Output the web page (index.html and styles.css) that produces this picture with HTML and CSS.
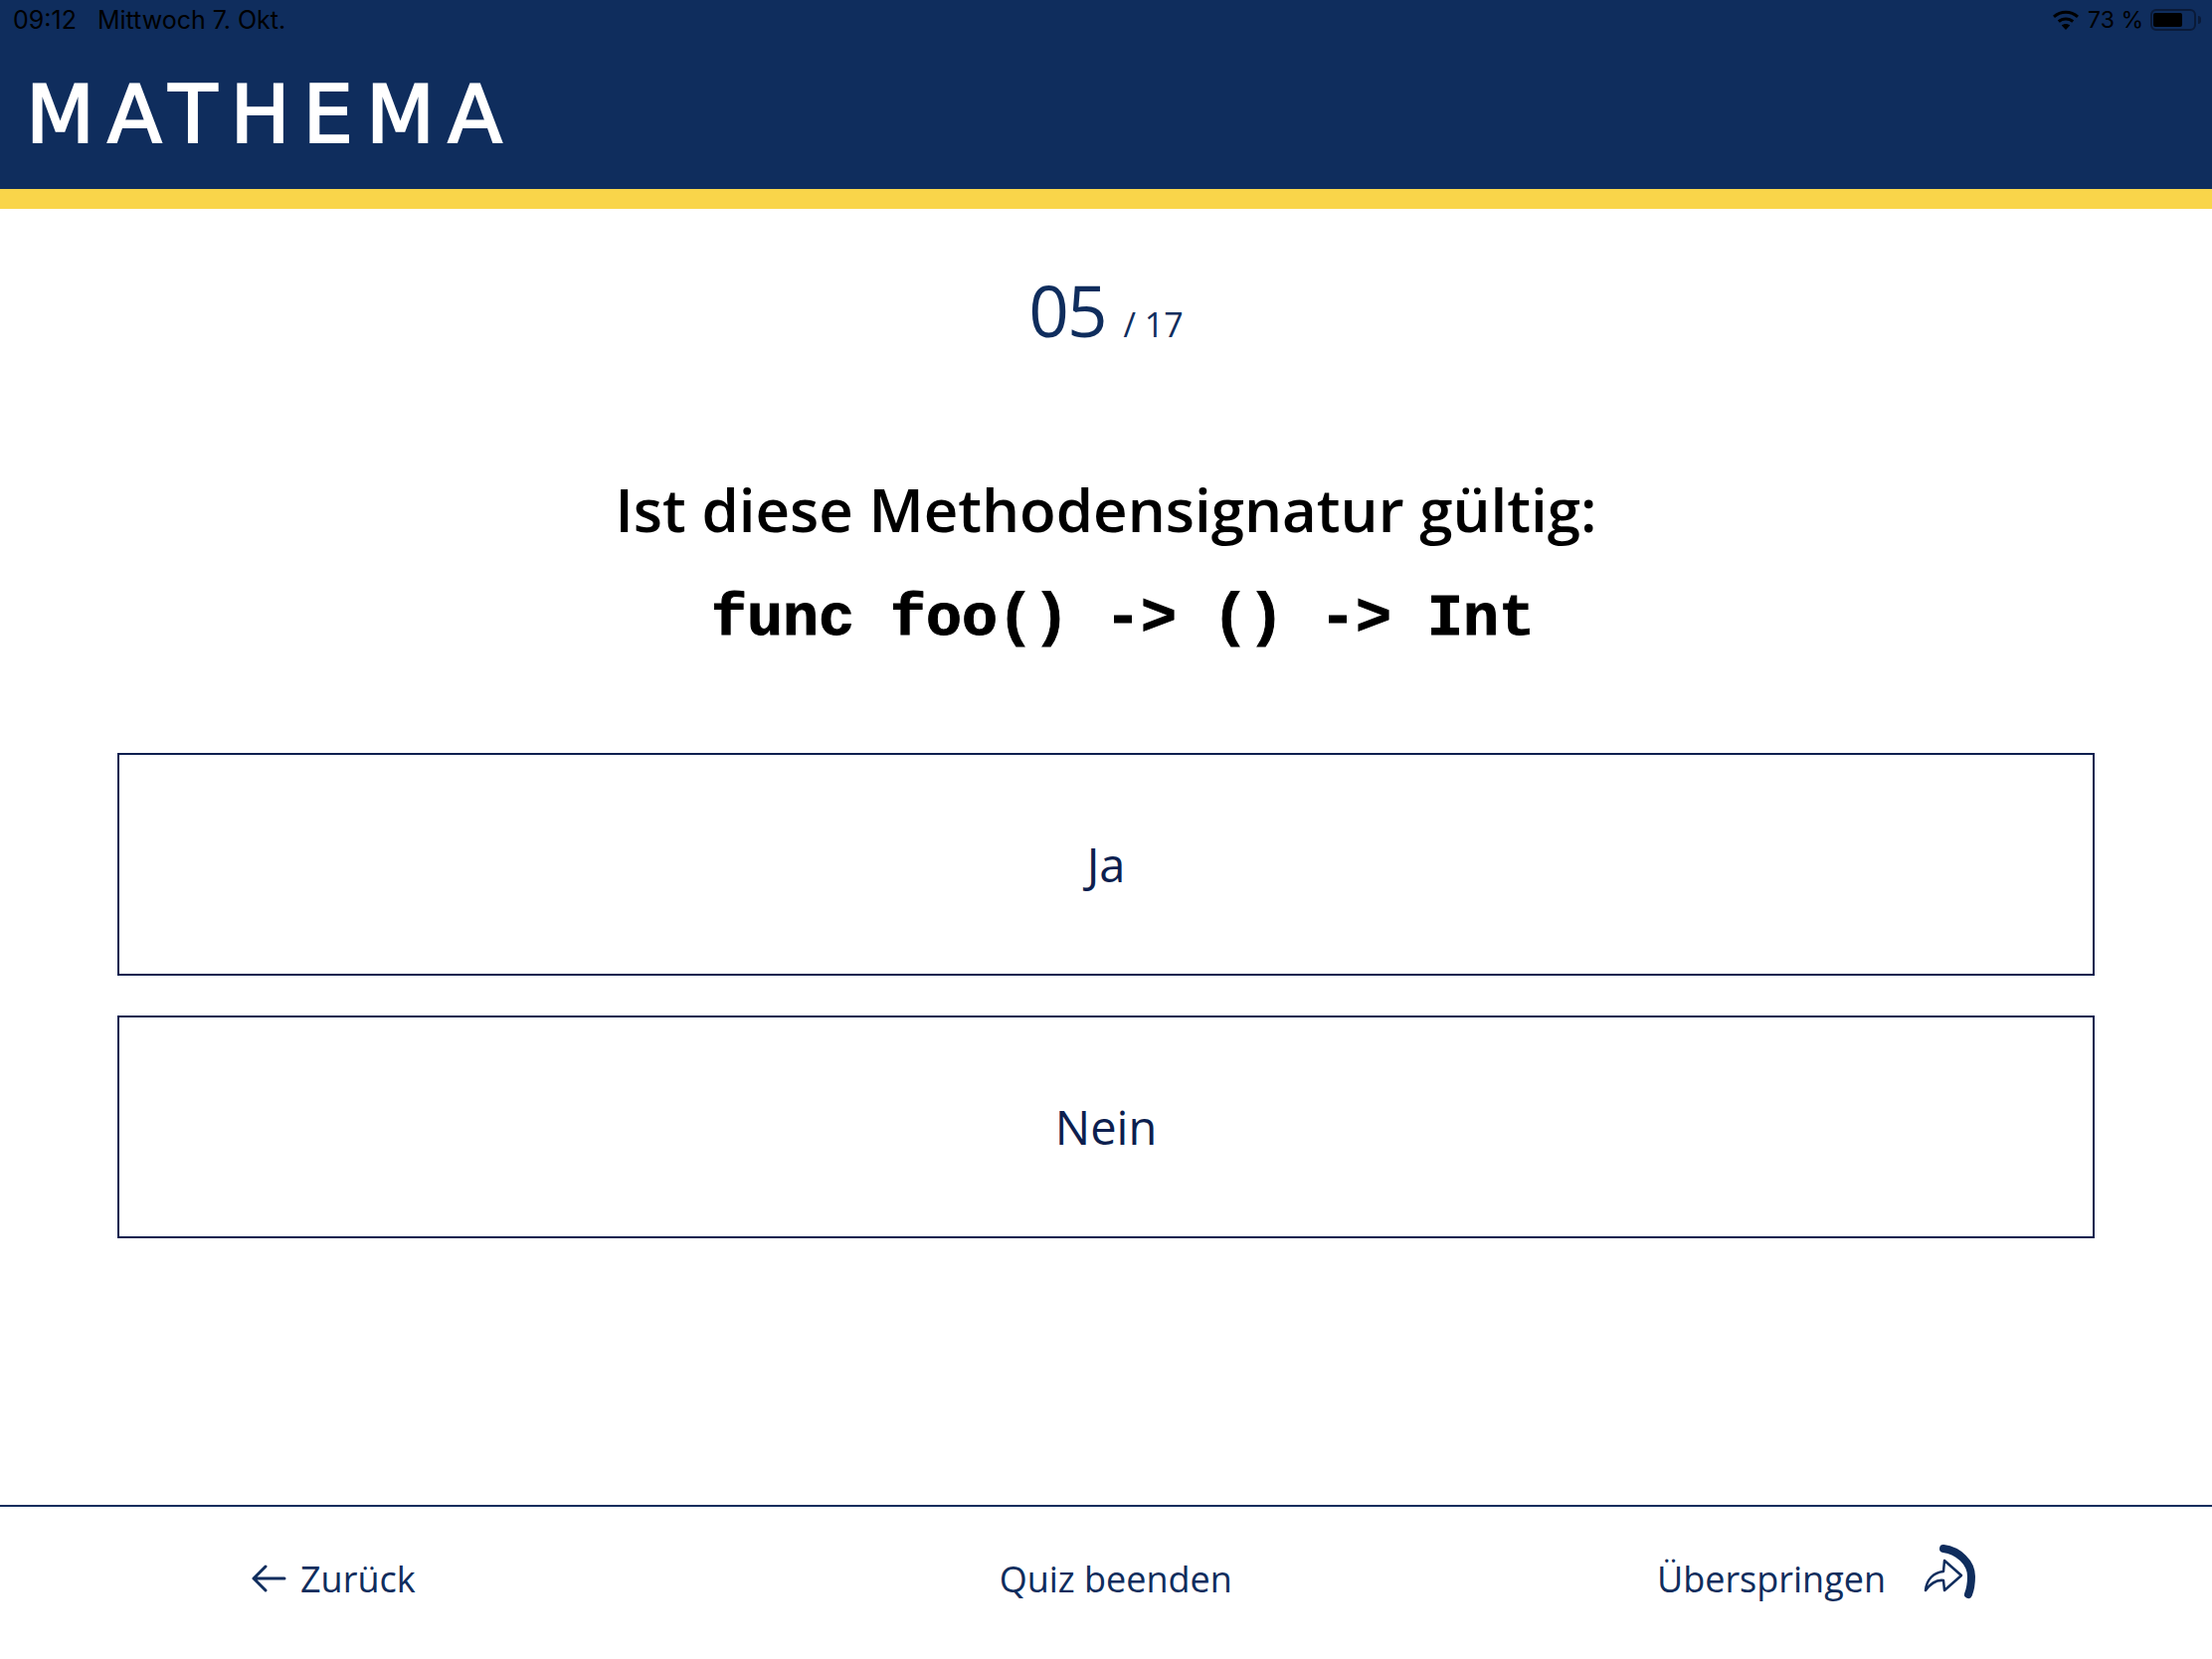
FILE: index.html
```html
<!DOCTYPE html>
<html lang="de">
<head>
    <meta charset="UTF-8">
    <meta name="viewport" content="width=device-width, initial-scale=1.0">
    <title>Mathema Quiz</title>
    <link rel="stylesheet" href="styles.css">
</head>
<body>
    <header class="header">
        <div class="status-bar">
            <div class="status-left">
                <span>09:12</span>
                <span>Mittwoch 7. Okt.</span>
            </div>
            <div class="status-right">
                <svg class="wifi" width="28" height="20" viewBox="0 0 28 20">
                    <path d="M14 20 L9.8 15.4 C12.2 13.4 15.8 13.4 18.2 15.4 Z" fill="#000"/>
                    <path d="M6.8 11.6 C10.8 8 17.2 8 21.2 11.6" fill="none" stroke="#000" stroke-width="3"/>
                    <path d="M2 6.8 C9 .6 19 .6 26 6.8" fill="none" stroke="#000" stroke-width="3"/>
                </svg>
                <span class="battery-text">73 %</span>
                <div class="battery"><div class="battery-level"></div></div>
                <div class="battery-nub"></div>
            </div>
        </div>
        <div class="logo">MATHEMA</div>
    </header>

    <main class="quiz">
        <div class="counter"><span class="counter-current">05</span><span class="counter-total">/ 17</span></div>
        <h1 class="question">Ist diese Methodensignatur gültig:</h1>
        <code class="code">func foo() -&gt; () -&gt; Int</code>
        <div class="answers">
            <div class="answer">Ja</div>
            <div class="answer">Nein</div>
        </div>
    </main>

    <footer class="footer">
        <div class="foot-item foot-back">
            <svg width="36" height="28" viewBox="0 0 36 28">
                <path d="M34 14 H3 M15 2 L3 14 L15 26" fill="none" stroke="#0f2d5d" stroke-width="3" stroke-linecap="round" stroke-linejoin="round"/>
            </svg>
            <span>Zurück</span>
        </div>
        <div class="foot-item foot-quit">Quiz beenden</div>
        <div class="foot-item foot-skip">
            <span>Überspringen</span>
            <svg class="skip-icon" width="60" height="60" viewBox="0 0 60 60">
                <path d="M22 7 C37 9 50 21 50 35 C50 42 49 48 47 53" fill="none" stroke="#0f2d5d" stroke-width="8" stroke-linecap="round"/>
                <path d="M4 49 C5 38 12 31 22 30 L23 19 L40 34 L23 49 L22 39 C14 38 9 42 4 49 Z" fill="none" stroke="#0f2d5d" stroke-width="2.5" stroke-linejoin="round"/>
            </svg>
        </div>
    </footer>
</body>
</html>
```

FILE: styles.css
```css
body {
    margin: 0;
    height: 1668px;
    display: flex;
    flex-direction: column;
    background: #fff;
    font-family: "Open Sans", sans-serif;
    color: #0f2d5d;
    overflow: hidden;
}
.header {
    height: 190px;
    background: #0f2d5d;
    border-bottom: 20px solid #f9d54a;
}
.status-bar {
    height: 40px;
    padding: 0 11px 0 13px;
    display: flex;
    justify-content: space-between;
    align-items: center;
    font-family: Inter, sans-serif;
    font-size: 25px;
    color: #000;
}
.status-left {
    display: flex;
    gap: 21px;
}
.status-right {
    display: flex;
    align-items: center;
    font-size: 23px;
}
.wifi {
    margin-right: 8px;
}
.battery {
    width: 46px;
    height: 22px;
    box-sizing: border-box;
    margin-left: 7px;
    padding: 2px 1px;
    border: 2px solid #0a1a38;
    border-radius: 6px;
}
.battery-level {
    width: 29px;
    height: 100%;
    background: #000;
    border-radius: 2px;
}
.battery-nub {
    width: 3px;
    height: 8px;
    margin-left: 2px;
    background: #0a1a38;
    border-radius: 0 3px 3px 0;
}
.logo {
    margin-top: 36px;
    padding-left: 26px;
    font-family: "DejaVu Sans", sans-serif;
    font-size: 80px;
    line-height: 80px;
    letter-spacing: 13px;
    -webkit-text-stroke: 2px #fff;
    color: #fff;
}
.quiz {
    flex: 1;
    display: flex;
    flex-direction: column;
    align-items: center;
}
.counter {
    margin-top: 57px;
    height: 90px;
    line-height: 90px;
}
.counter-current {
    font-size: 71px;
    letter-spacing: -2px;
}
.counter-total {
    margin-left: 18px;
    font-size: 34px;
    font-weight: 500;
}
.question {
    margin: 115px 0 0;
    font-size: 60px;
    line-height: 80px;
    font-weight: 600;
    color: #000;
}
.code {
    margin: 35px 0 0 34px;
    font-family: "Liberation Mono", monospace;
    font-size: 60px;
    line-height: 70px;
    font-weight: 700;
    -webkit-text-stroke: 1px #000;
    color: #000;
}
.answers {
    margin-top: 100px;
    width: 1988px;
    display: flex;
    flex-direction: column;
    gap: 40px;
}
.answer {
    height: 224px;
    box-sizing: border-box;
    border: 2px solid #0d1f4f;
    display: flex;
    justify-content: center;
    align-items: center;
    font-size: 47px;
    color: #0d1f4f;
}
.footer {
    height: 155px;
    box-sizing: border-box;
    padding-bottom: 9px;
    border-top: 2px solid #0f2d5d;
    display: flex;
    align-items: center;
    font-size: 36px;
}
.foot-item {
    display: flex;
    align-items: center;
}
.foot-back {
    margin-left: 252px;
    gap: 14px;
}
.foot-quit {
    margin-left: 587px;
}
.foot-skip {
    margin-left: 427px;
    gap: 36px;
}
.skip-icon {
    margin-bottom: 14px;
}
```
